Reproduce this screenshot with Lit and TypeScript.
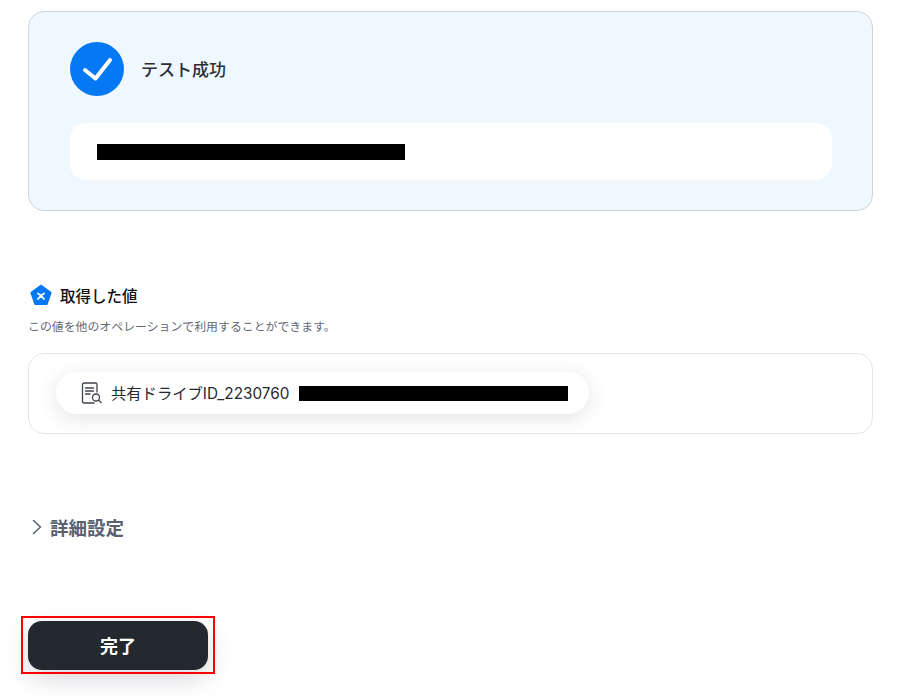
import { LitElement, css, html } from 'lit';
import { customElement } from 'lit/decorators.js';

@customElement('app-root')
export class AppRoot extends LitElement {
  static styles = css`
    :host {
      display: block;
      height: 696px;
      overflow: hidden;
      box-sizing: border-box;
      padding: 11px 29px 0 28px;
      background: #fff;
      font-family: Inter, 'Noto Sans CJK JP', 'Noto Sans', sans-serif;
      color: #24292f;
    }

    .result {
      box-sizing: border-box;
      height: 200px;
      padding: 30px 40px 0 41px;
      background: #eff7ff;
      border: 1px solid #cdd5df;
      border-radius: 16px;
    }

    .status {
      display: flex;
      align-items: center;
      gap: 17px;
      height: 54px;
    }

    .check {
      width: 54px;
      height: 54px;
      flex: none;
    }

    .status-text {
      padding-bottom: 2px;
      font-size: 17px;
      font-weight: 500;
      color: #2b3038;
    }

    .message {
      box-sizing: border-box;
      height: 57px;
      margin-top: 27px;
      padding: 21px 27px 0;
      background: #fff;
      border-radius: 16px;
    }

    .redact {
      display: block;
      height: 16px;
      background: #000;
    }

    .values {
      margin-top: 72px;
    }

    .values-head {
      display: flex;
      align-items: center;
      gap: 7px;
      height: 24px;
      padding-left: 1px;
      font-size: 15.500px;
      font-weight: 500;
      color: #111;
    }

    .pentagon {
      width: 24px;
      height: 24px;
      flex: none;
    }

    .hint {
      margin: 11px 0 0;
      font-size: 11.900px;
      line-height: 18px;
      color: #5f6873;
    }

    .values-box {
      box-sizing: border-box;
      height: 81px;
      margin-top: 17px;
      padding: 18px 27px 0;
      border: 1px solid #e4e6ea;
      border-radius: 16px;
    }

    .chip {
      box-sizing: border-box;
      display: inline-flex;
      align-items: center;
      width: 533px;
      height: 42px;
      padding: 0 20px 0 24px;
      background: #fff;
      border-radius: 21px;
      box-shadow: 0 4px 20px rgba(40, 50, 70, 0.13);
      font-size: 15.300px;
      color: #24292f;
    }

    .doc {
      width: 22px;
      height: 22px;
      flex: none;
      margin-right: 9px;
    }

    .chip-name {
      white-space: nowrap;
      padding-bottom: 2px;
    }

    .chip .redact {
      width: 269px;
      height: 15px;
      margin: 1px 0 0 10px;
    }

    .advanced {
      display: flex;
      align-items: center;
      gap: 5px;
      height: 26px;
      margin-top: 80px;
      padding-left: 1px;
      font-size: 18.500px;
      font-weight: 600;
      color: #5a6270;
    }

    .chevron {
      width: 16px;
      height: 18px;
      flex: none;
    }

    .actions {
      position: relative;
      width: 180px;
      margin-top: 81px;
    }

    button {
      display: block;
      width: 180px;
      height: 49px;
      padding: 0 0 2px;
      background: #24282f;
      border: none;
      border-radius: 14px;
      box-shadow: 0 8px 24px rgba(40, 50, 70, 0.2);
      color: #fff;
      font: inherit;
      font-size: 18px;
      font-weight: 700;
    }

    .highlight {
      position: absolute;
      left: -7px;
      top: -5px;
      width: 194px;
      height: 58px;
      box-sizing: border-box;
      border: 2px solid #f00;
      pointer-events: none;
    }
  `;

  render() {
    return html`
      <section class="result">
        <div class="status">
          <svg class="check" viewBox="0 0 54 54">
            <circle cx="27" cy="27" r="27" fill="#0579f5" />
            <path d="M15 28l10.500 8.500L40 18" fill="none" stroke="#fff" stroke-width="4" stroke-linecap="round" stroke-linejoin="round" />
          </svg>
          <span class="status-text">テスト成功</span>
        </div>
        <div class="message"><span class="redact" style="width: 308px"></span></div>
      </section>

      <section class="values">
        <div class="values-head">
          <svg class="pentagon" viewBox="0 0 24 24">
            <path d="M12 1.500l10 7.200c.5.4.7 1 .5 1.600l-3.700 10.700c-.2.6-.8 1-1.400 1H6.600c-.6 0-1.200-.4-1.400-1L1.500 10.300c-.2-.6 0-1.200.5-1.600z" fill="#0579f5" />
            <path d="M9 10.500q3 1.500 6 5.500M15 10.500q-3 1.500-6 5.500" fill="none" stroke="#fff" stroke-width="1.800" stroke-linecap="round" />
          </svg>
          <span>取得した値</span>
        </div>
        <p class="hint">この値を他のオペレーションで利用することができます。</p>
        <div class="values-box">
          <div class="chip">
            <svg class="doc" viewBox="0 0 22 22" fill="none" stroke="#3f444c" stroke-width="1.300" stroke-linecap="round">
              <path d="M14 21H4c-.8 0-1.500-.7-1.500-1.500V2.500C2.500 1.700 3.200 1 4 1h11.500c.8 0 1.500.7 1.500 1.500V10" />
              <path d="M5.500 6h8M5.500 9h8M5.500 12h4.500" />
              <circle cx="16" cy="15.500" r="3.500" />
              <path d="M18.500 18l2.500 2.500" />
            </svg>
            <span class="chip-name">共有ドライブID_2230760</span>
            <span class="redact"></span>
          </div>
        </div>
      </section>

      <div class="advanced">
        <svg class="chevron" viewBox="0 0 16 18">
          <path d="M4.500 2.500l7 6.500-7 6.500" fill="none" stroke="#5a6270" stroke-width="1.600" stroke-linecap="round" stroke-linejoin="round" />
        </svg>
        <span>詳細設定</span>
      </div>

      <div class="actions">
        <button type="button">完了</button>
        <div class="highlight"></div>
      </div>
    `;
  }
}
